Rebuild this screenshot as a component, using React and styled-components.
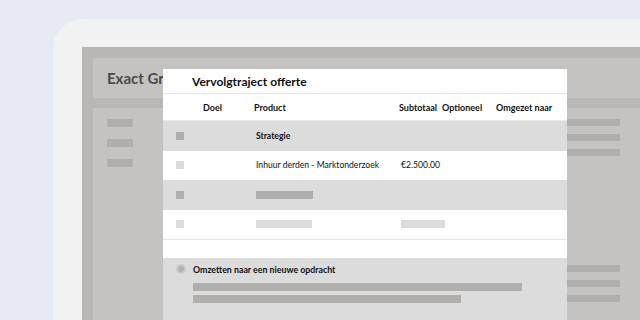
import React from 'react'
import styled, { createGlobalStyle } from 'styled-components'

const GlobalStyle = createGlobalStyle`
  html, body {
    margin: 0;
    padding: 0;
    background: #e6eaf2;
    overflow: hidden;
  }
  body {
    font-family: Lato, 'Open Sans', sans-serif;
  }
`

const Page = styled.div`
  width: 640px;
  height: 320px;
  padding: 19px 0 0 53px;
  box-sizing: border-box;
  overflow: hidden;
`

const Device = styled.div`
  height: 301px;
  background: #f2f2f2;
  border-top-left-radius: 30px;
  padding: 28px 0 0 29px;
  box-sizing: border-box;
`

const Screen = styled.div`
  position: relative;
  height: 100%;
  background: #b8b7b5;
  padding: 11px 0 0 11px;
  box-sizing: border-box;
  display: flex;
  flex-direction: column;
  gap: 10px;
`

const AppHeader = styled.div`
  height: 40px;
  background: #c4c3c1;
  display: flex;
  align-items: center;
  padding-left: 14px;
  font-size: 15px;
  font-weight: 700;
  color: #4b4b4b;
`

const AppBody = styled.div`
  flex: 1;
  background: #c4c3c1;
  display: flex;
  justify-content: space-between;
  padding: 11px 20px 0 14px;
`

const SideList = styled.div`
  display: flex;
  flex-direction: column;
  gap: ${(p) => p.$gap}px;
`

const Bar = styled.div`
  width: ${(p) => p.$w}px;
  height: ${(p) => p.$h || 8}px;
  background: ${(p) => p.$c || '#b0afad'};
  margin-top: ${(p) => p.$mt || 0}px;
`

const Modal = styled.div`
  position: absolute;
  left: 81px;
  top: 22px;
  width: 404px;
  bottom: 0;
  background: #fff;
  color: #111;
  display: flex;
  flex-direction: column;
`

const Title = styled.div`
  height: 24px;
  display: flex;
  align-items: center;
  padding-left: 29px;
  font-size: 12px;
  font-weight: 700;
  border-bottom: 1px solid #e6e6e6;
`

const cols = '27px 51px 145px 43px 54px 1fr'

const HeadRow = styled.div`
  display: grid;
  grid-template-columns: ${cols};
  align-items: center;
  height: 26px;
  padding-left: 13px;
  font-size: 9px;
  font-weight: 700;
  white-space: nowrap;
  border-bottom: 1px solid #e6e6e6;
`

const Row = styled.div`
  display: grid;
  grid-template-columns: ${cols};
  align-items: center;
  height: 29.5px;
  padding-left: 13px;
  font-size: 8.6px;
  font-weight: ${(p) => (p.$shade ? 700 : 400)};
  background: ${(p) => (p.$shade ? '#dcdcdc' : '#fff')};
  &:last-of-type {
    border-bottom: 1px solid #e6e6e6;
  }
`

const Cell = styled.div`
  padding-left: 2px;
  white-space: nowrap;
`

const Check = styled.div`
  width: 8px;
  height: 8px;
  background: ${(p) => (p.$shade ? '#aeaeae' : '#dcdcdc')};
`

const Rows = styled.div`
  display: flex;
  flex-direction: column;
`

const Spacer = styled.div`
  height: 18px;
`

const Option = styled.div`
  flex: 1;
  background: #dcdcdc;
  padding: 6px 0 0 13px;
  display: grid;
  grid-template-columns: 17px 1fr;
  align-content: start;
`

const Radio = styled.div`
  width: 10px;
  height: 10px;
  border-radius: 50%;
  background: #c9c9c9;
  display: flex;
  align-items: center;
  justify-content: center;
  &::after {
    content: '';
    width: 6px;
    height: 6px;
    border-radius: 50%;
    background: #b3b3b3;
  }
`

const OptionBody = styled.div`
  display: flex;
  flex-direction: column;
`

const OptionLabel = styled.div`
  font-size: 8.8px;
  font-weight: 700;
  line-height: 12px;
  margin-bottom: 7px;
`

const rows = [
  { shade: true, product: 'Strategie' },
  { shade: false, product: 'Inhuur derden - Marktonderzoek', subtotal: '€2.500.00' },
  { shade: true, productBar: { w: 57, c: '#b0afad' } },
  { shade: false, productBar: { w: 56, c: '#dcdcdc' }, subtotalBar: { w: 44, c: '#dcdcdc' } },
]

const App = () => {
  return (
    <Page>
      <GlobalStyle />
      <Device>
        <Screen>
          <AppHeader>Exact Groep</AppHeader>
          <AppBody>
            <SideList $gap={12}>
              <Bar $w={26} />
              <Bar $w={26} />
              <Bar $w={26} />
            </SideList>
            <SideList $gap={8}>
              <Bar $w={53} $h={7} />
              <Bar $w={53} $h={7} />
              <Bar $w={53} $h={7} />
              <Bar $w={53} $h={7} $mt={101} />
              <Bar $w={53} $h={7} />
              <Bar $w={53} $h={7} />
            </SideList>
          </AppBody>

          <Modal>
            <Title>Vervolgtraject offerte</Title>
            <HeadRow>
              <span />
              <span>Doel</span>
              <span>Product</span>
              <span>Subtotaal</span>
              <span>Optioneel</span>
              <span>Omgezet naar</span>
            </HeadRow>
            <Rows>
              {rows.map((r, i) => (
                <Row key={i} $shade={r.shade}>
                  <Check $shade={r.shade} />
                  <span />
                  <Cell>
                    {r.product}
                    {r.productBar && <Bar $w={r.productBar.w} $c={r.productBar.c} />}
                  </Cell>
                  <Cell>
                    {r.subtotal}
                    {r.subtotalBar && <Bar $w={r.subtotalBar.w} $c={r.subtotalBar.c} />}
                  </Cell>
                  <span />
                  <span />
                </Row>
              ))}
            </Rows>
            <Spacer />
            <Option>
              <Radio />
              <OptionBody>
                <OptionLabel>Omzetten naar een nieuwe opdracht</OptionLabel>
                <SideList $gap={4}>
                  <Bar $w={329} />
                  <Bar $w={268} />
                </SideList>
              </OptionBody>
            </Option>
          </Modal>
        </Screen>
      </Device>
    </Page>
  )
}

export default App
